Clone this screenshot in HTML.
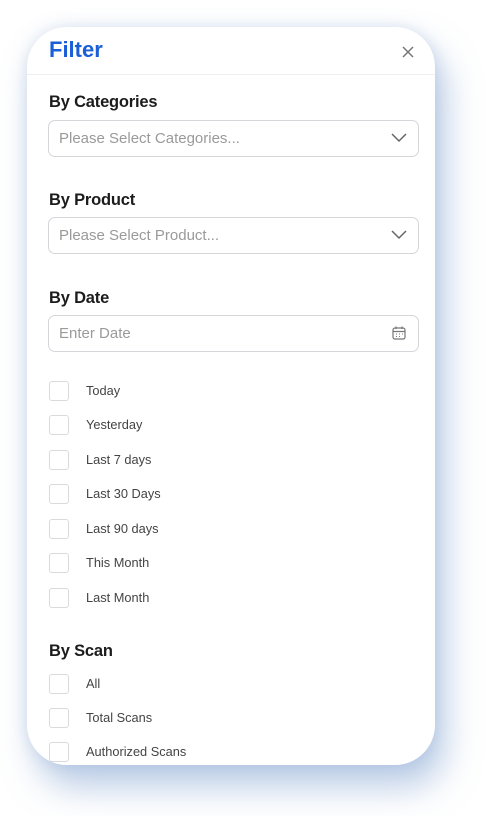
<!DOCTYPE html><html><head><style>
body{margin:0;width:486px;height:816px;background:#fff;font-family:"Liberation Sans",sans-serif;position:relative;overflow:hidden}
.card{position:absolute;left:27px;top:27px;width:408px;height:738px;background:#fff;border-radius:40px;box-shadow:10px 22px 34px rgba(120,155,205,.5),0 0 16px rgba(170,190,220,.4);overflow:hidden}
.a{position:absolute}
.t{left:22px;top:10px;font-size:22px;color:#1a5fd6;font-weight:bold}
.hr{left:0;top:47px;width:408px;height:1px;background:#eceef1}
.l{left:22px;font-size:16.5px;color:#1c1c1c;font-weight:bold;letter-spacing:-.2px}
.in{left:21px;width:371px;height:37px;border:1px solid #d4d6da;border-radius:7px;font-size:15px;color:#9a9a9a;line-height:36px;text-indent:10px;box-sizing:border-box}
.cb{left:22px;width:20px;height:20px;border:1px solid #d8dadd;border-radius:3px;box-sizing:border-box}
.ct{left:59px;font-size:12.8px;color:#444}
</style></head><body><div class="card">
<div class="a t">Filter</div>
<svg class="a" style="left:375px;top:19px" width="12" height="12"><path d="M1 1L11 11M11 1L1 11" stroke="#777" stroke-width="1.5"/></svg>
<div class="a hr"></div>
<div class="a l" style="top:66px">By Categories</div>
<div class="a in" style="top:93px">Please Select Categories...</div>
<svg class="a" style="left:364px;top:106px" width="16" height="10"><path d="M1 1L8 8L15 1" stroke="#666" stroke-width="1.5" fill="none"/></svg>
<div class="a l" style="top:164px">By Product</div>
<div class="a in" style="top:190px">Please Select Product...</div>
<svg class="a" style="left:364px;top:203px" width="16" height="10"><path d="M1 1L8 8L15 1" stroke="#666" stroke-width="1.5" fill="none"/></svg>
<div class="a l" style="top:262px">By Date</div>
<div class="a in" style="top:288px">Enter Date</div>
<svg class="a" style="left:365px;top:299px" width="14" height="14"><rect x="1" y="2" width="12" height="11" rx="2" fill="none" stroke="#777" stroke-width="1.2"/><path d="M1 5.5H13M4 0.5V3M10 0.5V3" stroke="#777" stroke-width="1.2"/><path d="M4 8h1M7 8h1M10 8h1M4 10.5h1M7 10.5h1" stroke="#777"/></svg>
<div class="a cb" style="top:354px"></div><div class="a ct" style="top:356px">Today</div>
<div class="a cb" style="top:388px"></div><div class="a ct" style="top:390px">Yesterday</div>
<div class="a cb" style="top:423px"></div><div class="a ct" style="top:425px">Last 7 days</div>
<div class="a cb" style="top:457px"></div><div class="a ct" style="top:459px">Last 30 Days</div>
<div class="a cb" style="top:492px"></div><div class="a ct" style="top:494px">Last 90 days</div>
<div class="a cb" style="top:526px"></div><div class="a ct" style="top:528px">This Month</div>
<div class="a cb" style="top:561px"></div><div class="a ct" style="top:563px">Last Month</div>
<div class="a l" style="top:615px">By Scan</div>
<div class="a cb" style="top:647px"></div><div class="a ct" style="top:649px">All</div>
<div class="a cb" style="top:681px"></div><div class="a ct" style="top:683px">Total Scans</div>
<div class="a cb" style="top:715px"></div><div class="a ct" style="top:717px">Authorized Scans</div>
</div></body></html>
